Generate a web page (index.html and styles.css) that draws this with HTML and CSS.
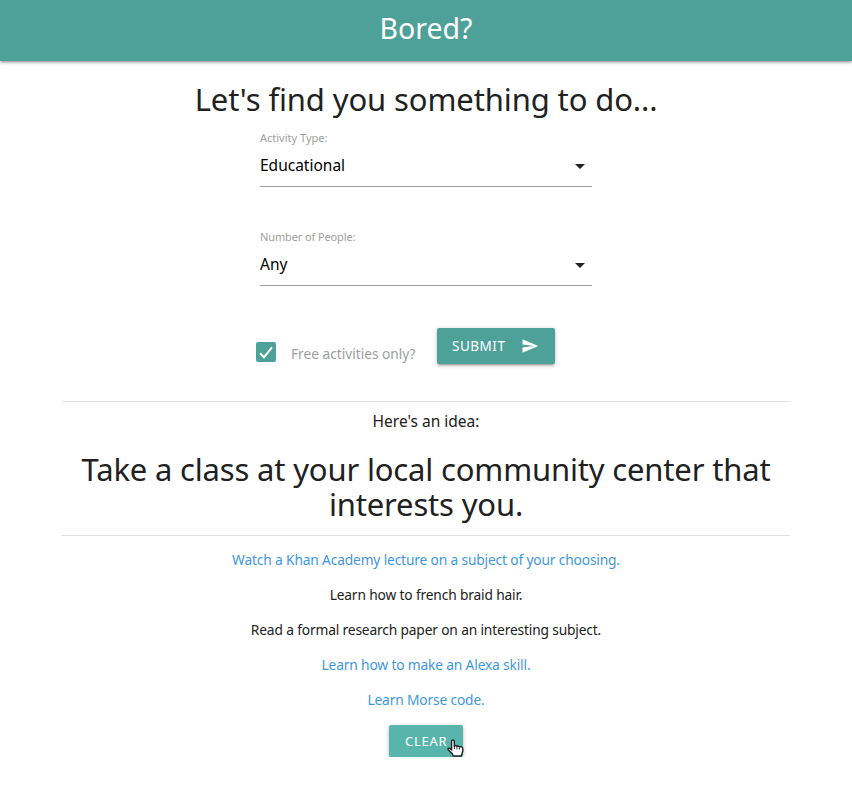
FILE: index.html
```html
<!DOCTYPE html>
<html lang="en">
<head>
<meta charset="utf-8">
<title>Bored?</title>
<link rel="stylesheet" href="styles.css">
</head>
<body>
<header class="nav"><span class="brand">Bored?</span></header>
<main class="container">
  <h1 class="title">Let's find you something to do...</h1>
  <form class="form">
    <div class="field">
      <label class="label">Activity Type:</label>
      <div class="select"><span>Educational</span><svg class="caret" viewBox="0 0 24 24"><path d="M7 10l5 5 5-5z"/></svg></div>
    </div>
    <div class="field">
      <label class="label people">Number of People:</label>
      <div class="select"><span>Any</span><svg class="caret" viewBox="0 0 24 24"><path d="M7 10l5 5 5-5z"/></svg></div>
    </div>
    <div class="actions">
      <div class="check"><span class="box"><svg viewBox="0 0 20 20"><path d="M4 11.2l4 4L16 5.3"/></svg></span><span>Free activities only?</span></div>
      <button type="button" class="btn submit"><span>SUBMIT</span><svg viewBox="0 0 24 24"><path d="M2.01 21L23 12 2.01 3 2 10l15 2-15 2z"/></svg></button>
    </div>
  </form>
  <section class="idea">
    <p class="intro">Here's an idea:</p>
    <h2 class="result">Take a class at your local community center that interests you.</h2>
  </section>
  <ul class="history">
    <li><a>Watch a Khan Academy lecture on a subject of your choosing.</a></li>
    <li>Learn how to french braid hair.</li>
    <li>Read a formal research paper on an interesting subject.</li>
    <li><a>Learn how to make an Alexa skill.</a></li>
    <li><a>Learn Morse code.</a></li>
  </ul>
  <div class="footer"><button type="button" class="btn clear"><span>CLEAR</span><svg class="cursor" viewBox="0 0 17 18"><path d="M5.2 1.2Q6.7.5 7.3 2.2V7Q8.5 6 9.8 7.3 11.1 6.5 12.4 7.9 15.8 7.1 15.8 10V12.2L14.2 17H6.2L5.3 14.7 1.2 10.8Q.6 8.7 2.6 9.2L4.6 10.8V2.2Q4.6 1.4 5.2 1.2Z"/><path d="M7.5 7V10M10 8V10.5M12.5 8.5V10.5" stroke-width=".9"/></svg></button></div>
</main>
</body>
</html>
```
FILE: styles.css
```css
* { box-sizing: border-box; }
body { margin: 0; background: #fff; color: #212121; font-family: "Noto Sans", sans-serif; font-size: 14px; }
.nav { height: 61px; display: flex; justify-content: center; background: #4da199; color: #fff; box-shadow: 0 2px 2px 0 rgba(0,0,0,.14), 0 3px 1px -2px rgba(0,0,0,.12), 0 1px 5px 0 rgba(0,0,0,.2); }
.brand { font-size: 28.5px; line-height: 57px; }
.container { width: 728px; margin: 0 auto; }
.title { margin: 19px 0 0; font-size: 31px; letter-spacing: -.12px; line-height: 38px; font-weight: 400; text-align: center; white-space: nowrap; }
.form { width: 332px; margin: 12px auto 0; }
.field { height: 99px; }
.label { display: block; height: 15px; font-size: 11px; line-height: 15px; color: #9e9e9e; }
.people { letter-spacing: -.12px; }
.select { height: 42px; display: flex; justify-content: space-between; align-items: center; border-bottom: 1px solid #9e9e9e; color: #000; font-size: 15.5px; padding-bottom: 1px; }
.select span { margin-top: -1px; }
.caret { width: 24px; height: 24px; margin-top: 1px; fill: #212121; }
.actions { display: flex; align-items: flex-start; margin-left: -4px; width: 299px; justify-content: space-between; }
.check { display: flex; gap: 15px; margin-top: 14px; color: #9e9e9e; font-size: 13.7px; line-height: 24px; white-space: nowrap; }
.box { width: 20px; height: 20px; border-radius: 2px; background: #4da199; }
.box svg { display: block; width: 20px; height: 20px; fill: none; stroke: #fff; stroke-width: 2; }
.btn { border: 0; border-radius: 2px; background: #4da199; color: #fff; font: 13.5px "Noto Sans", sans-serif; display: flex; align-items: center; box-shadow: 0 2px 2px 0 rgba(0,0,0,.14), 0 3px 1px -2px rgba(0,0,0,.12), 0 1px 5px 0 rgba(0,0,0,.2); }
.submit { width: 118px; height: 36px; padding: 0 16px 0 15px; justify-content: space-between; letter-spacing: .5px; }
.submit svg { width: 18px; height: 18px; fill: #fff; }
.idea { height: 135px; margin-top: 35px; border: solid #e0e0e0; border-width: 1px 0; text-align: center; }
.intro { margin: 7px 0 0; font-size: 15.5px; line-height: 24px; }
.result { margin: 19px 0 0; font-size: 31px; letter-spacing: -.17px; line-height: 35px; font-weight: 400; }
.history { list-style: none; margin: 13px 0 0; padding: 0; text-align: center; font-size: 13.75px; letter-spacing: -.15px; }
.history li { height: 35px; line-height: 22px; }
.history a { color: #3f97e2; }
.footer { display: flex; justify-content: center; margin-top: 1px; }
.clear { position: relative; width: 74px; height: 32px; padding: 0 16px; background: #58b5ac; font-size: 13px; letter-spacing: .75px; }
.cursor { position: absolute; left: 58px; top: 14px; width: 17px; height: 18px; fill: #fff; stroke: #222; stroke-width: 1.4; }
```
